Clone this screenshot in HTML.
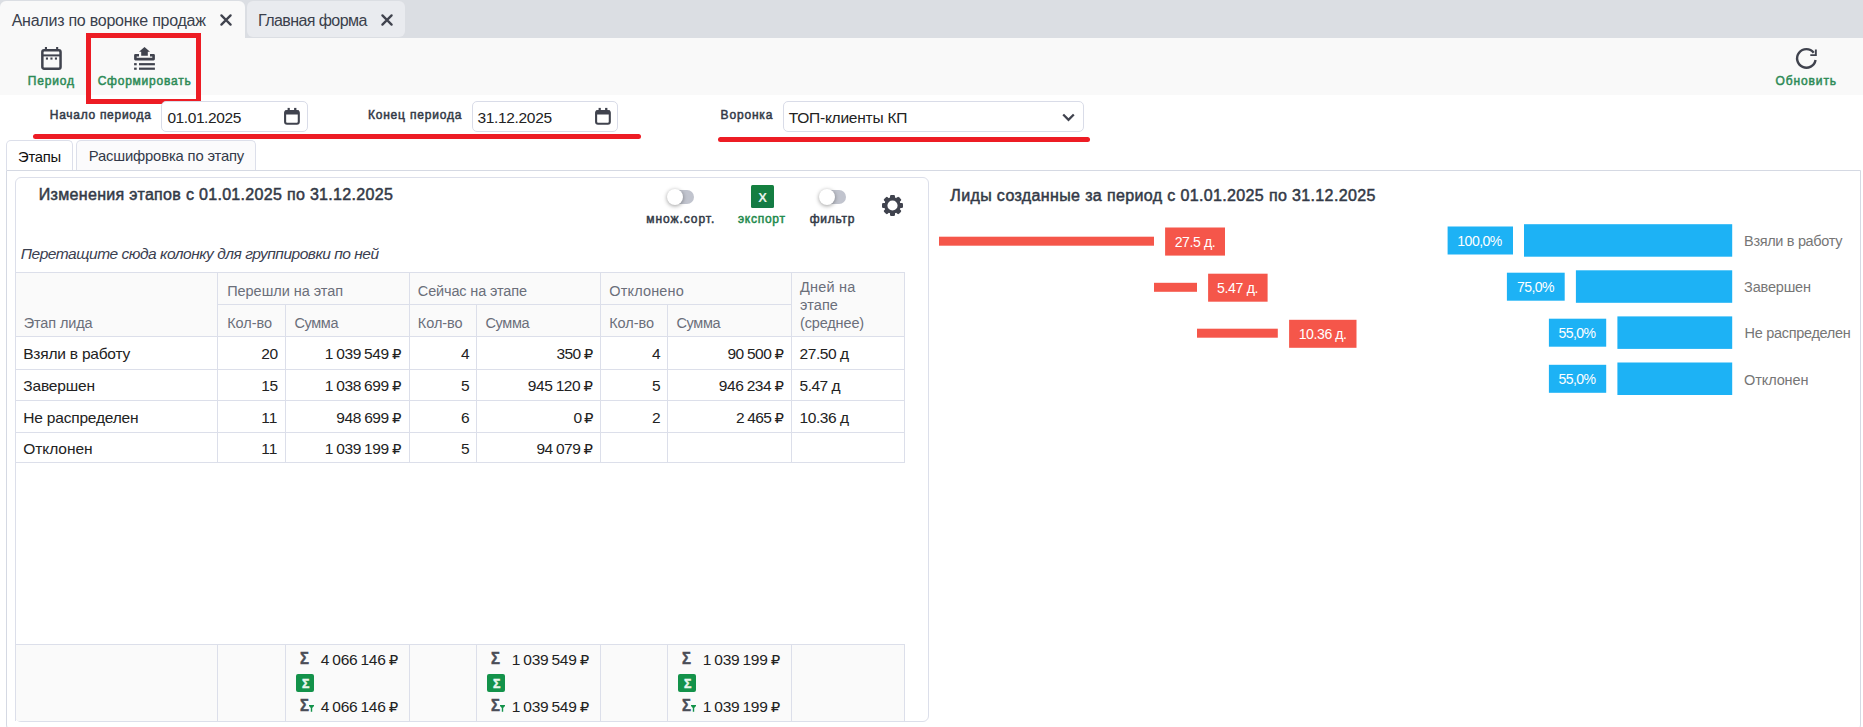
<!DOCTYPE html>
<html lang="ru">
<head>
<meta charset="utf-8">
<title>Анализ по воронке продаж</title>
<style>
html,body{margin:0;padding:0;}
body{width:1863px;height:727px;overflow:hidden;background:#fff;position:relative;font-family:"Liberation Sans","DejaVu Sans",sans-serif;color:#333;}
.abs,.t,.ln,.box{position:absolute;}
.t{white-space:pre;display:block;}
.ln{background:#dcdfea;}
#tabbar{left:0;top:0;width:1863px;height:38px;background:#dbdee3;}
#tab1{left:0;top:1px;width:245px;height:37px;background:#f9f9f9;border-radius:6px 6px 0 0;}
#tab2{left:247px;top:1px;width:158px;height:36px;background:#e9ebef;border-radius:6px;}
#toolbar{left:0;top:38px;width:1863px;height:57px;background:#f9f9f9;}
.redbox{left:86px;top:33px;width:105px;height:61px;border:5px solid #ed1c24;}
.redline{height:5px;border-radius:3px;background:#ed1c24;}
.inp{background:#fff;border:1px solid #d9dce8;border-radius:5px;box-sizing:border-box;}
.itab{box-sizing:border-box;border:1px solid #dcdfea;border-bottom:none;border-radius:5px 5px 0 0;background:#fff;}
#tabcontent{left:6px;top:170px;width:1855px;height:561px;box-sizing:border-box;border:1px solid #d5d9e3;border-radius:0 0 6px 6px;}
#panel{left:15px;top:177px;width:914px;height:545px;box-sizing:border-box;border:1px solid #dcdfea;border-radius:6px;}
.hdr{background:#fafafa;}
.toggle-track{background:#c1c4ce;border-radius:7px;}
.toggle-knob{background:#fff;border-radius:50%;box-shadow:0 1px 4px rgba(0,0,0,.4);}
.xl{background:linear-gradient(#14803f,#147a45);border-radius:1.5px;}
.sigbox{background:#13924a;border-radius:2px;}
.red{background:#f5564a;}
.blue{background:#1db2f5;}
svg{position:absolute;overflow:visible;}
.rub{font-family:"DejaVu Sans",sans-serif;font-size:.96em}

</style>
</head>
<body>
<div id="tabbar" class="abs"></div>
<div id="tab1" class="abs"></div>
<div id="tab2" class="abs"></div>
<div id="toolbar" class="abs"></div>

<!-- close icons on tabs -->
<svg style="left:219.5px;top:14.2px" width="12" height="12" viewBox="0 0 12 12"><path d="M1.4 1.4 L10.6 10.6 M10.6 1.4 L1.4 10.6" stroke="#40434e" stroke-width="2.3" stroke-linecap="round" fill="none"/></svg>
<svg style="left:380.5px;top:14.2px" width="12" height="12" viewBox="0 0 12 12"><path d="M1.4 1.4 L10.6 10.6 M10.6 1.4 L1.4 10.6" stroke="#40434e" stroke-width="2.3" stroke-linecap="round" fill="none"/></svg>

<!-- toolbar icons -->
<svg style="left:41px;top:47px" width="21" height="23" viewBox="0 0 21 23">
  <rect x="1.35" y="3.25" width="18.2" height="18.4" rx="1.7" fill="none" stroke="#40434e" stroke-width="2.5"/>
  <rect x="1" y="7.4" width="19" height="2" fill="#40434e"/>
  <rect x="3.9" y="0" width="2.1" height="3" fill="#40434e"/>
  <rect x="15.1" y="0" width="2.1" height="3" fill="#40434e"/>
  <rect x="4.9" y="10.5" width="2.1" height="2.1" fill="#40434e"/><rect x="9.4" y="10.5" width="2.1" height="2.1" fill="#40434e"/><rect x="13.9" y="10.5" width="2.1" height="2.1" fill="#40434e"/>
</svg>
<svg style="left:134px;top:47px" width="21" height="23" viewBox="0 0 21 23">
  <path d="M10.5 -0.1 L16 4.7 H13.8 V8.8 H7.2 V4.7 H5 Z" fill="#40434e"/>
  <path d="M5 8.2 H1.4 V12.1 H19.6 V8.2 H16" fill="none" stroke="#40434e" stroke-width="2.6" stroke-linejoin="round"/>
  <rect x="0.1" y="16.1" width="2.6" height="2.2" fill="#40434e"/><rect x="5" y="16.1" width="15.9" height="2.2" fill="#40434e"/>
  <rect x="0.1" y="20.6" width="2.6" height="2.2" fill="#40434e"/><rect x="5" y="20.6" width="15.9" height="2.2" fill="#40434e"/>
</svg>
<svg style="left:1795px;top:47px" width="22" height="22" viewBox="0 0 22 22">
  <path d="M20.56 13.0 A9.3 9.3 0 1 1 18.73 5.67" fill="none" stroke="#40434e" stroke-width="2.4"/>
  <path d="M19.9 2.5 H21.8 V9 H15.3 V7.2 H19.9 Z" fill="#40434e"/>
</svg>

<div class="box redbox"></div>

<!-- filter row -->
<div class="box inp" style="left:161px;top:101px;width:147px;height:31px"></div>
<div class="box inp" style="left:472px;top:101px;width:146px;height:31px"></div>
<div class="box inp" style="left:783px;top:101px;width:301px;height:31px"></div>
<svg style="left:284px;top:108px" width="16" height="17" viewBox="0 0 16 17">
  <rect x="1.1" y="2.95" width="13.7" height="12.8" rx="1.9" fill="none" stroke="#40434e" stroke-width="2.1"/>
  <rect x="1" y="2.5" width="14" height="4" fill="#40434e"/>
  <rect x="3.6" y="-0.1" width="2.2" height="3" fill="#40434e"/><rect x="10.1" y="-0.1" width="2.3" height="3" fill="#40434e"/>
</svg>
<svg style="left:595px;top:108px" width="16" height="17" viewBox="0 0 16 17">
  <rect x="1.1" y="2.95" width="13.7" height="12.8" rx="1.9" fill="none" stroke="#40434e" stroke-width="2.1"/>
  <rect x="1" y="2.5" width="14" height="4" fill="#40434e"/>
  <rect x="3.6" y="-0.1" width="2.2" height="3" fill="#40434e"/><rect x="10.1" y="-0.1" width="2.3" height="3" fill="#40434e"/>
</svg>
<svg style="left:1062px;top:113px" width="13" height="9" viewBox="0 0 13 9"><path d="M1.2 1.5 L6.5 6.8 L11.8 1.5" fill="none" stroke="#40434e" stroke-width="2.3"/></svg>
<div class="box redline" style="left:33px;top:134px;width:608px"></div>
<div class="box redline" style="left:718px;top:137px;width:372px"></div>

<!-- inner tabs -->
<div id="tabcontent" class="abs"></div>
<div class="box itab" style="left:6px;top:140px;width:67px;height:30px"></div>
<div class="box itab" style="left:76px;top:140px;width:180px;height:30px;background:#fbfbfc"></div>

<div id="panel" class="abs"></div>

<!-- grid toolbar -->
<div class="box toggle-track" style="left:672px;top:190px;width:22px;height:14px"></div>
<div class="box toggle-knob" style="left:666.5px;top:188.5px;width:16.5px;height:16.5px"></div>
<div class="box toggle-track" style="left:824px;top:190px;width:22px;height:14px"></div>
<div class="box toggle-knob" style="left:818.5px;top:188.5px;width:16.5px;height:16.5px"></div>
<div class="box xl" style="left:751px;top:185.3px;width:22.8px;height:22.3px"></div>
<svg style="left:882px;top:195px" width="21" height="21" viewBox="-10.5 -10.5 21 21"><g fill="#40434e"><rect x="-2.5" y="-10.5" width="5" height="5" rx="1.2" transform="rotate(0)"/><rect x="-2.5" y="-10.5" width="5" height="5" rx="1.2" transform="rotate(45)"/><rect x="-2.5" y="-10.5" width="5" height="5" rx="1.2" transform="rotate(90)"/><rect x="-2.5" y="-10.5" width="5" height="5" rx="1.2" transform="rotate(135)"/><rect x="-2.5" y="-10.5" width="5" height="5" rx="1.2" transform="rotate(180)"/><rect x="-2.5" y="-10.5" width="5" height="5" rx="1.2" transform="rotate(225)"/><rect x="-2.5" y="-10.5" width="5" height="5" rx="1.2" transform="rotate(270)"/><rect x="-2.5" y="-10.5" width="5" height="5" rx="1.2" transform="rotate(315)"/></g><circle r="6.7" fill="none" stroke="#40434e" stroke-width="3.2"/></svg>

<!-- grid -->
<div class="box hdr" style="left:16px;top:272px;width:889px;height:65px"></div>
<div class="box hdr" style="left:16px;top:645px;width:888px;height:76px;border-bottom-left-radius:3px"></div>
<!-- horizontal lines -->
<div class="ln" style="left:16px;top:272px;width:889px;height:1px"></div>
<div class="ln" style="left:217px;top:304px;width:574px;height:1px"></div>
<div class="ln" style="left:16px;top:336px;width:889px;height:1px"></div>
<div class="ln" style="left:16px;top:369px;width:889px;height:1px"></div>
<div class="ln" style="left:16px;top:400px;width:889px;height:1px"></div>
<div class="ln" style="left:16px;top:432px;width:889px;height:1px"></div>
<div class="ln" style="left:16px;top:462px;width:889px;height:1px"></div>
<div class="ln" style="left:16px;top:644px;width:889px;height:1px"></div>
<!-- vertical lines -->
<div class="ln" style="left:15px;top:272px;width:1px;height:449px"></div>
<div class="ln" style="left:904px;top:272px;width:1px;height:191px"></div>
<div class="ln" style="left:904px;top:644px;width:1px;height:77px"></div>
<div class="ln" style="left:217px;top:272px;width:1px;height:190px"></div>
<div class="ln" style="left:285px;top:304px;width:1px;height:158px"></div>
<div class="ln" style="left:409px;top:272px;width:1px;height:190px"></div>
<div class="ln" style="left:476px;top:304px;width:1px;height:158px"></div>
<div class="ln" style="left:600px;top:272px;width:1px;height:190px"></div>
<div class="ln" style="left:667px;top:304px;width:1px;height:158px"></div>
<div class="ln" style="left:791px;top:272px;width:1px;height:190px"></div>
<div class="ln" style="left:217px;top:644px;width:1px;height:77px"></div>
<div class="ln" style="left:285px;top:644px;width:1px;height:77px"></div>
<div class="ln" style="left:409px;top:644px;width:1px;height:77px"></div>
<div class="ln" style="left:476px;top:644px;width:1px;height:77px"></div>
<div class="ln" style="left:600px;top:644px;width:1px;height:77px"></div>
<div class="ln" style="left:667px;top:644px;width:1px;height:77px"></div>
<div class="ln" style="left:791px;top:644px;width:1px;height:77px"></div>

<!-- footer sigma boxes -->
<div class="box sigbox" style="left:296px;top:674px;width:18px;height:18px"></div>
<div class="box sigbox" style="left:487px;top:674px;width:18px;height:18px"></div>
<div class="box sigbox" style="left:678px;top:674px;width:18px;height:18px"></div>

<svg style="left:309.1px;top:705.2px" width="5" height="7" viewBox="0 0 5 7"><path d="M0 0 H5 V0.9 L3.2 3 V6.7 H1.8 V3 L0 0.9 Z" fill="#13924a"/></svg>
<svg style="left:500.1px;top:705.2px" width="5" height="7" viewBox="0 0 5 7"><path d="M0 0 H5 V0.9 L3.2 3 V6.7 H1.8 V3 L0 0.9 Z" fill="#13924a"/></svg>
<svg style="left:691.1px;top:705.2px" width="5" height="7" viewBox="0 0 5 7"><path d="M0 0 H5 V0.9 L3.2 3 V6.7 H1.8 V3 L0 0.9 Z" fill="#13924a"/></svg>
<!-- charts -->
<svg style="left:0;top:0" width="1863" height="727" viewBox="0 0 1863 727">
  <rect x="939" y="236.7" width="215" height="9" fill="#f5564a"/>
  <rect x="1165.1" y="227.5" width="59.9" height="28.1" fill="#f5564a"/>
  <rect x="1154" y="282.8" width="43" height="9" fill="#f5564a"/>
  <rect x="1208.1" y="273.7" width="59.5" height="28" fill="#f5564a"/>
  <rect x="1197" y="328.7" width="80.8" height="9" fill="#f5564a"/>
  <rect x="1289.1" y="319.8" width="67.4" height="28" fill="#f5564a"/>
  <rect x="1447.6" y="226.5" width="65.4" height="28" fill="#1db2f5"/>
  <rect x="1524" y="224.2" width="208.2" height="32.5" fill="#1db2f5"/>
  <rect x="1506.9" y="272.7" width="57.8" height="28" fill="#1db2f5"/>
  <rect x="1575.9" y="270.3" width="156.3" height="32.5" fill="#1db2f5"/>
  <rect x="1548.9" y="318.7" width="57.3" height="28" fill="#1db2f5"/>
  <rect x="1617.4" y="316.4" width="114.8" height="32.5" fill="#1db2f5"/>
  <rect x="1548.9" y="364.8" width="57.3" height="28" fill="#1db2f5"/>
  <rect x="1617.4" y="362.5" width="114.8" height="32.5" fill="#1db2f5"/>
</svg>

<span class="t" style="left:11.7px;top:10.00px;font-size:16.04px;line-height:21px;color:#3a3f4c;letter-spacing:-0.26px;">Анализ по воронке продаж</span>
<span class="t" style="left:258.0px;top:10.00px;font-size:16.04px;line-height:21px;color:#3a3f4c;letter-spacing:-0.59px;">Главная форма</span>
<span class="t" style="left:27.7px;top:73.00px;font-size:12.01px;line-height:16px;color:#2e8b57;letter-spacing:0.83px;-webkit-text-stroke:0.5px;">Период</span>
<span class="t" style="left:97.7px;top:73.00px;font-size:12.01px;line-height:16px;color:#2e8b57;letter-spacing:0.76px;-webkit-text-stroke:0.5px;">Сформировать</span>
<span class="t" style="left:1775.5px;top:73.00px;font-size:12.01px;line-height:16px;color:#2e8b57;letter-spacing:0.89px;-webkit-text-stroke:0.5px;">Обновить</span>
<span class="t" style="left:49.8px;top:107.00px;font-size:12.01px;line-height:16px;color:#333a47;letter-spacing:0.71px;-webkit-text-stroke:0.5px;">Начало периода</span>
<span class="t" style="left:167.4px;top:108.00px;font-size:15.52px;line-height:20px;color:#222;letter-spacing:-0.42px;">01.01.2025</span>
<span class="t" style="left:367.9px;top:107.00px;font-size:12.01px;line-height:16px;color:#333a47;letter-spacing:0.81px;-webkit-text-stroke:0.5px;">Конец периода</span>
<span class="t" style="left:477.4px;top:108.00px;font-size:15.52px;line-height:20px;color:#222;letter-spacing:-0.33px;">31.12.2025</span>
<span class="t" style="left:720.6px;top:107.00px;font-size:12.01px;line-height:16px;color:#333a47;letter-spacing:0.82px;-webkit-text-stroke:0.5px;">Воронка</span>
<span class="t" style="left:788.7px;top:108.00px;font-size:15.52px;line-height:20px;color:#222;letter-spacing:-0.24px;">ТОП-клиенты КП</span>
<span class="t" style="left:18.1px;top:148.00px;font-size:14.8px;line-height:19px;color:#111;letter-spacing:-0.27px;">Этапы</span>
<span class="t" style="left:88.7px;top:147.00px;font-size:14.8px;line-height:19px;color:#333a4a;letter-spacing:-0.16px;">Расшифровка по этапу</span>
<span class="t" style="left:38.8px;top:184.00px;font-size:16.04px;line-height:21px;color:#333a47;letter-spacing:0.3px;-webkit-text-stroke:0.5px;">Изменения этапов с 01.01.2025 по 31.12.2025</span>
<span class="t" style="left:646.3px;top:211.00px;font-size:12.01px;line-height:16px;color:#333a47;letter-spacing:0.94px;-webkit-text-stroke:0.5px;">множ.сорт.</span>
<span class="t" style="left:738.0px;top:211.00px;font-size:12.01px;line-height:16px;color:#1e8a4c;letter-spacing:0.73px;-webkit-text-stroke:0.5px;">экспорт</span>
<span class="t" style="left:809.8px;top:211.00px;font-size:12.01px;line-height:16px;color:#333a47;letter-spacing:0.69px;-webkit-text-stroke:0.5px;">фильтр</span>
<span class="t" style="left:758.2px;top:189.00px;font-size:13.04px;line-height:17px;font-weight:700;color:#e4f1e9;">X</span>
<span class="t" style="left:20.8px;top:244.00px;font-size:15.52px;line-height:20px;color:#3b4050;letter-spacing:-0.48px;font-style:italic;">Перетащите сюда колонку для группировки по ней</span>
<span class="t" style="left:23.7px;top:314.00px;font-size:14.49px;line-height:19px;color:#6b6f7a;letter-spacing:-0.12px;">Этап лида</span>
<span class="t" style="left:227.2px;top:282.00px;font-size:14.49px;line-height:19px;color:#6b6f7a;letter-spacing:-0.03px;">Перешли на этап</span>
<span class="t" style="left:417.8px;top:282.00px;font-size:14.49px;line-height:19px;color:#6b6f7a;letter-spacing:-0.13px;">Сейчас на этапе</span>
<span class="t" style="left:609.2px;top:282.00px;font-size:14.49px;line-height:19px;color:#6b6f7a;letter-spacing:0.18px;">Отклонено</span>
<span class="t" style="left:227.2px;top:314.00px;font-size:14.49px;line-height:19px;color:#6b6f7a;letter-spacing:-0.04px;">Кол-во</span>
<span class="t" style="left:417.8px;top:314.00px;font-size:14.49px;line-height:19px;color:#6b6f7a;letter-spacing:-0.04px;">Кол-во</span>
<span class="t" style="left:609.2px;top:314.00px;font-size:14.49px;line-height:19px;color:#6b6f7a;letter-spacing:-0.04px;">Кол-во</span>
<span class="t" style="left:294.4px;top:314.00px;font-size:14.49px;line-height:19px;color:#6b6f7a;letter-spacing:-0.34px;">Сумма</span>
<span class="t" style="left:485.5px;top:314.00px;font-size:14.49px;line-height:19px;color:#6b6f7a;letter-spacing:-0.34px;">Сумма</span>
<span class="t" style="left:676.5px;top:314.00px;font-size:14.49px;line-height:19px;color:#6b6f7a;letter-spacing:-0.34px;">Сумма</span>
<span class="t" style="left:800.0px;top:278.00px;font-size:14.49px;line-height:19px;color:#6b6f7a;letter-spacing:0.21px;">Дней на</span>
<span class="t" style="left:800.0px;top:296.00px;font-size:14.49px;line-height:19px;color:#6b6f7a;letter-spacing:0.1px;">этапе</span>
<span class="t" style="left:800.0px;top:314.00px;font-size:14.49px;line-height:19px;color:#6b6f7a;letter-spacing:-0.14px;">(среднее)</span>
<span class="t" style="left:23.2px;top:344.00px;font-size:15.52px;line-height:20px;color:#222;letter-spacing:-0.22px;">Взяли в работу</span>
<span class="t" style="left:23.2px;top:376.00px;font-size:15.52px;line-height:20px;color:#222;letter-spacing:-0.15px;">Завершен</span>
<span class="t" style="left:23.2px;top:408.00px;font-size:15.52px;line-height:20px;color:#222;letter-spacing:-0.19px;">Не распределен</span>
<span class="t" style="left:23.2px;top:439.00px;font-size:15.52px;line-height:20px;color:#222;letter-spacing:-0.06px;">Отклонен</span>
<span class="t" style="left:261.3px;top:344.00px;font-size:15.52px;line-height:20px;color:#222;letter-spacing:-0.55px;word-spacing:-0.6px;">20</span>
<span class="t" style="left:324.8px;top:344.00px;font-size:15.52px;line-height:20px;color:#222;letter-spacing:-0.44px;word-spacing:-0.6px;">1 039 549 <span class="rub">₽</span></span>
<span class="t" style="left:460.9px;top:344.00px;font-size:15.52px;line-height:20px;color:#222;word-spacing:-0.6px;">4</span>
<span class="t" style="left:556.5px;top:344.00px;font-size:15.52px;line-height:20px;color:#222;letter-spacing:-0.61px;word-spacing:-0.6px;">350 <span class="rub">₽</span></span>
<span class="t" style="left:651.9px;top:344.00px;font-size:15.52px;line-height:20px;color:#222;word-spacing:-0.6px;">4</span>
<span class="t" style="left:727.4px;top:344.00px;font-size:15.52px;line-height:20px;color:#222;letter-spacing:-0.49px;word-spacing:-0.6px;">90 500 <span class="rub">₽</span></span>
<span class="t" style="left:799.5px;top:344.00px;font-size:15.52px;line-height:20px;color:#222;letter-spacing:-0.43px;">27.50 д</span>
<span class="t" style="left:261.3px;top:376.00px;font-size:15.52px;line-height:20px;color:#222;letter-spacing:-0.55px;word-spacing:-0.6px;">15</span>
<span class="t" style="left:324.8px;top:376.00px;font-size:15.52px;line-height:20px;color:#222;letter-spacing:-0.44px;word-spacing:-0.6px;">1 038 699 <span class="rub">₽</span></span>
<span class="t" style="left:460.9px;top:376.00px;font-size:15.52px;line-height:20px;color:#222;word-spacing:-0.6px;">5</span>
<span class="t" style="left:527.8px;top:376.00px;font-size:15.52px;line-height:20px;color:#222;letter-spacing:-0.44px;word-spacing:-0.6px;">945 120 <span class="rub">₽</span></span>
<span class="t" style="left:651.9px;top:376.00px;font-size:15.52px;line-height:20px;color:#222;word-spacing:-0.6px;">5</span>
<span class="t" style="left:718.8px;top:376.00px;font-size:15.52px;line-height:20px;color:#222;letter-spacing:-0.44px;word-spacing:-0.6px;">946 234 <span class="rub">₽</span></span>
<span class="t" style="left:799.5px;top:376.00px;font-size:15.52px;line-height:20px;color:#222;letter-spacing:-0.49px;">5.47 д</span>
<span class="t" style="left:261.3px;top:408.00px;font-size:15.52px;line-height:20px;color:#222;letter-spacing:0.03px;word-spacing:-0.6px;">11</span>
<span class="t" style="left:336.3px;top:408.00px;font-size:15.52px;line-height:20px;color:#222;letter-spacing:-0.44px;word-spacing:-0.6px;">948 699 <span class="rub">₽</span></span>
<span class="t" style="left:460.9px;top:408.00px;font-size:15.52px;line-height:20px;color:#222;word-spacing:-0.6px;">6</span>
<span class="t" style="left:573.6px;top:408.00px;font-size:15.52px;line-height:20px;color:#222;letter-spacing:-0.98px;word-spacing:-0.6px;">0 <span class="rub">₽</span></span>
<span class="t" style="left:651.9px;top:408.00px;font-size:15.52px;line-height:20px;color:#222;word-spacing:-0.6px;">2</span>
<span class="t" style="left:736.0px;top:408.00px;font-size:15.52px;line-height:20px;color:#222;letter-spacing:-0.56px;word-spacing:-0.6px;">2 465 <span class="rub">₽</span></span>
<span class="t" style="left:799.5px;top:408.00px;font-size:15.52px;line-height:20px;color:#222;letter-spacing:-0.43px;">10.36 д</span>
<span class="t" style="left:261.3px;top:439.00px;font-size:15.52px;line-height:20px;color:#222;letter-spacing:0.03px;word-spacing:-0.6px;">11</span>
<span class="t" style="left:324.8px;top:439.00px;font-size:15.52px;line-height:20px;color:#222;letter-spacing:-0.44px;word-spacing:-0.6px;">1 039 199 <span class="rub">₽</span></span>
<span class="t" style="left:460.9px;top:439.00px;font-size:15.52px;line-height:20px;color:#222;word-spacing:-0.6px;">5</span>
<span class="t" style="left:536.4px;top:439.00px;font-size:15.52px;line-height:20px;color:#222;letter-spacing:-0.49px;word-spacing:-0.6px;">94 079 <span class="rub">₽</span></span>
<span class="t" style="left:300.0px;top:648.00px;font-size:16.15px;line-height:21px;font-weight:700;color:#4a4d57;transform:scaleX(.92);transform-origin:0 0;-webkit-text-stroke:0.5px;">Σ</span>
<span class="t" style="left:320.7px;top:650.00px;font-size:15.52px;line-height:20px;color:#222;letter-spacing:-0.34px;word-spacing:-0.6px;">4 066 146 <span class="rub">₽</span></span>
<span class="t" style="left:301.5px;top:675.00px;font-size:13.45px;line-height:17px;font-weight:700;color:#eaf6ee;transform:scaleX(.92);transform-origin:0 0;-webkit-text-stroke:0.5px;">Σ</span>
<span class="t" style="left:300.0px;top:695.00px;font-size:16.15px;line-height:21px;font-weight:700;color:#4a4d57;transform:scaleX(.92);transform-origin:0 0;-webkit-text-stroke:0.5px;">Σ</span>
<span class="t" style="left:320.7px;top:697.00px;font-size:15.52px;line-height:20px;color:#222;letter-spacing:-0.34px;word-spacing:-0.6px;">4 066 146 <span class="rub">₽</span></span>
<span class="t" style="left:491.0px;top:648.00px;font-size:16.15px;line-height:21px;font-weight:700;color:#4a4d57;transform:scaleX(.92);transform-origin:0 0;-webkit-text-stroke:0.5px;">Σ</span>
<span class="t" style="left:511.7px;top:650.00px;font-size:15.52px;line-height:20px;color:#222;letter-spacing:-0.34px;word-spacing:-0.6px;">1 039 549 <span class="rub">₽</span></span>
<span class="t" style="left:492.5px;top:675.00px;font-size:13.45px;line-height:17px;font-weight:700;color:#eaf6ee;transform:scaleX(.92);transform-origin:0 0;-webkit-text-stroke:0.5px;">Σ</span>
<span class="t" style="left:491.0px;top:695.00px;font-size:16.15px;line-height:21px;font-weight:700;color:#4a4d57;transform:scaleX(.92);transform-origin:0 0;-webkit-text-stroke:0.5px;">Σ</span>
<span class="t" style="left:511.7px;top:697.00px;font-size:15.52px;line-height:20px;color:#222;letter-spacing:-0.34px;word-spacing:-0.6px;">1 039 549 <span class="rub">₽</span></span>
<span class="t" style="left:682.0px;top:648.00px;font-size:16.15px;line-height:21px;font-weight:700;color:#4a4d57;transform:scaleX(.92);transform-origin:0 0;-webkit-text-stroke:0.5px;">Σ</span>
<span class="t" style="left:702.7px;top:650.00px;font-size:15.52px;line-height:20px;color:#222;letter-spacing:-0.34px;word-spacing:-0.6px;">1 039 199 <span class="rub">₽</span></span>
<span class="t" style="left:683.5px;top:675.00px;font-size:13.45px;line-height:17px;font-weight:700;color:#eaf6ee;transform:scaleX(.92);transform-origin:0 0;-webkit-text-stroke:0.5px;">Σ</span>
<span class="t" style="left:682.0px;top:695.00px;font-size:16.15px;line-height:21px;font-weight:700;color:#4a4d57;transform:scaleX(.92);transform-origin:0 0;-webkit-text-stroke:0.5px;">Σ</span>
<span class="t" style="left:702.7px;top:697.00px;font-size:15.52px;line-height:20px;color:#222;letter-spacing:-0.34px;word-spacing:-0.6px;">1 039 199 <span class="rub">₽</span></span>
<span class="t" style="left:950.3px;top:185.00px;font-size:16.04px;line-height:21px;color:#333a47;letter-spacing:0.35px;-webkit-text-stroke:0.5px;">Лиды созданные за период с 01.01.2025 по 31.12.2025</span>
<span class="t" style="left:1174.7px;top:233.00px;font-size:14.08px;line-height:18px;color:#fff;letter-spacing:-0.42px;">27.5 д.</span>
<span class="t" style="left:1217.0px;top:279.00px;font-size:14.08px;line-height:18px;color:#fff;letter-spacing:-0.32px;">5.47 д.</span>
<span class="t" style="left:1298.7px;top:325.00px;font-size:14.08px;line-height:18px;color:#fff;letter-spacing:-0.42px;">10.36 д.</span>
<span class="t" style="left:1457.3px;top:232.00px;font-size:14.08px;line-height:18px;color:#fff;letter-spacing:-0.54px;">100,0%</span>
<span class="t" style="left:1516.9px;top:278.00px;font-size:14.08px;line-height:18px;color:#fff;letter-spacing:-0.56px;">75,0%</span>
<span class="t" style="left:1558.6px;top:324.00px;font-size:14.08px;line-height:18px;color:#fff;letter-spacing:-0.6px;">55,0%</span>
<span class="t" style="left:1558.6px;top:370.00px;font-size:14.08px;line-height:18px;color:#fff;letter-spacing:-0.6px;">55,0%</span>
<span class="t" style="left:1744.1px;top:232.00px;font-size:14.49px;line-height:19px;color:#767676;letter-spacing:-0.33px;">Взяли в работу</span>
<span class="t" style="left:1744.1px;top:278.00px;font-size:14.49px;line-height:19px;color:#767676;letter-spacing:-0.18px;">Завершен</span>
<span class="t" style="left:1744.6px;top:324.00px;font-size:14.49px;line-height:19px;color:#767676;letter-spacing:-0.3px;">Не распределен</span>
<span class="t" style="left:1744.1px;top:371.00px;font-size:14.49px;line-height:19px;color:#767676;letter-spacing:-0.12px;">Отклонен</span>

</body>
</html>
